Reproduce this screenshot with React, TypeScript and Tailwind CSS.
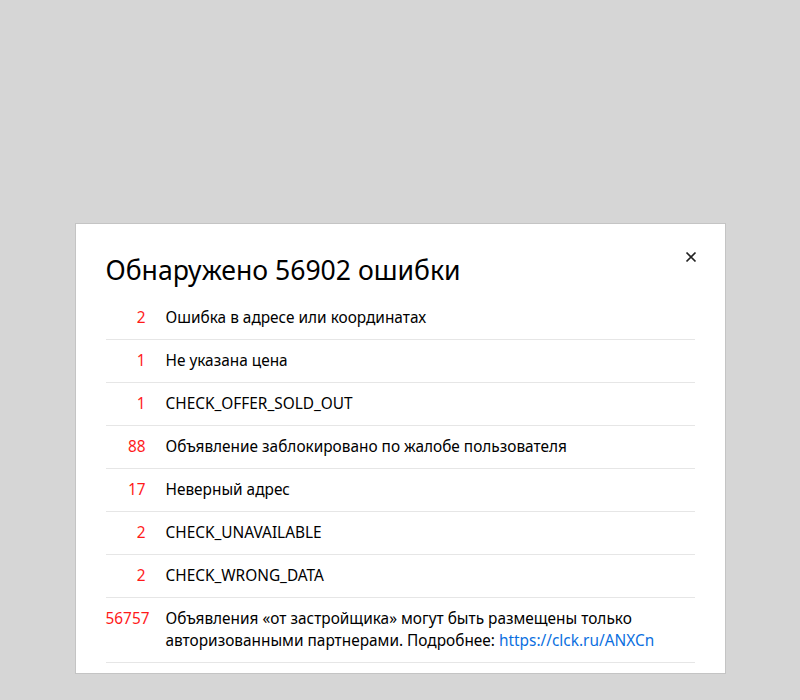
import React from "react";

interface ErrorRow {
    count: number;
    text: React.ReactNode;
}

const rows: ErrorRow[] = [
    { count: 2, text: "Ошибка в адресе или координатах" },
    { count: 1, text: "Не указана цена" },
    { count: 1, text: "CHECK_OFFER_SOLD_OUT" },
    { count: 88, text: "Объявление заблокировано по жалобе пользователя" },
    { count: 17, text: "Неверный адрес" },
    { count: 2, text: "CHECK_UNAVAILABLE" },
    { count: 2, text: "CHECK_WRONG_DATA" },
    {
        count: 56757,
        text: (
            <>
                Объявления «от застройщика» могут быть размещены только
                авторизованными партнерами. Подробнее:{" "}
                <a className="text-[#0b6fe0]" href="#">
                    https://clck.ru/ANXCn
                </a>
            </>
        ),
    },
];

const App: React.FC = () => {
    return (
        <div
            className="min-h-[700px] bg-[#d6d6d6] pt-[223px] flex justify-center"
            style={{ fontFamily: '"Noto Sans", "Open Sans", sans-serif' }}
        >
            <div className="relative w-[651px] h-[451px] bg-white border border-[#c4c4c4] px-[30px] pt-[30px] text-black">
                <button className="absolute top-[26px] right-[27px] w-[14px] h-[14px] flex items-center justify-center">
                    <svg width="12" height="12" viewBox="0 0 12 12">
                        <path
                            d="M1.5 1.5 L10.5 10.5 M10.5 1.5 L1.5 10.5"
                            stroke="#222"
                            strokeWidth="1.7"
                        />
                    </svg>
                </button>
                <h1 className="text-[26.6px] leading-[32px] font-normal">
                    Обнаружено 56902 ошибки
                </h1>
                <div className="mt-[11px]">
                    {rows.map((row, i) => (
                        <div
                            key={i}
                            className="flex py-[10px] border-b border-[#e6e6e6] text-[15.4px] leading-[22px]"
                        >
                            <div className="w-[40px] shrink-0 text-right whitespace-nowrap text-[#ff1a1a]">
                                {row.count}
                            </div>
                            <div className="pl-[20px] pr-[40px]">{row.text}</div>
                        </div>
                    ))}
                </div>
            </div>
        </div>
    );
};

export default App;
